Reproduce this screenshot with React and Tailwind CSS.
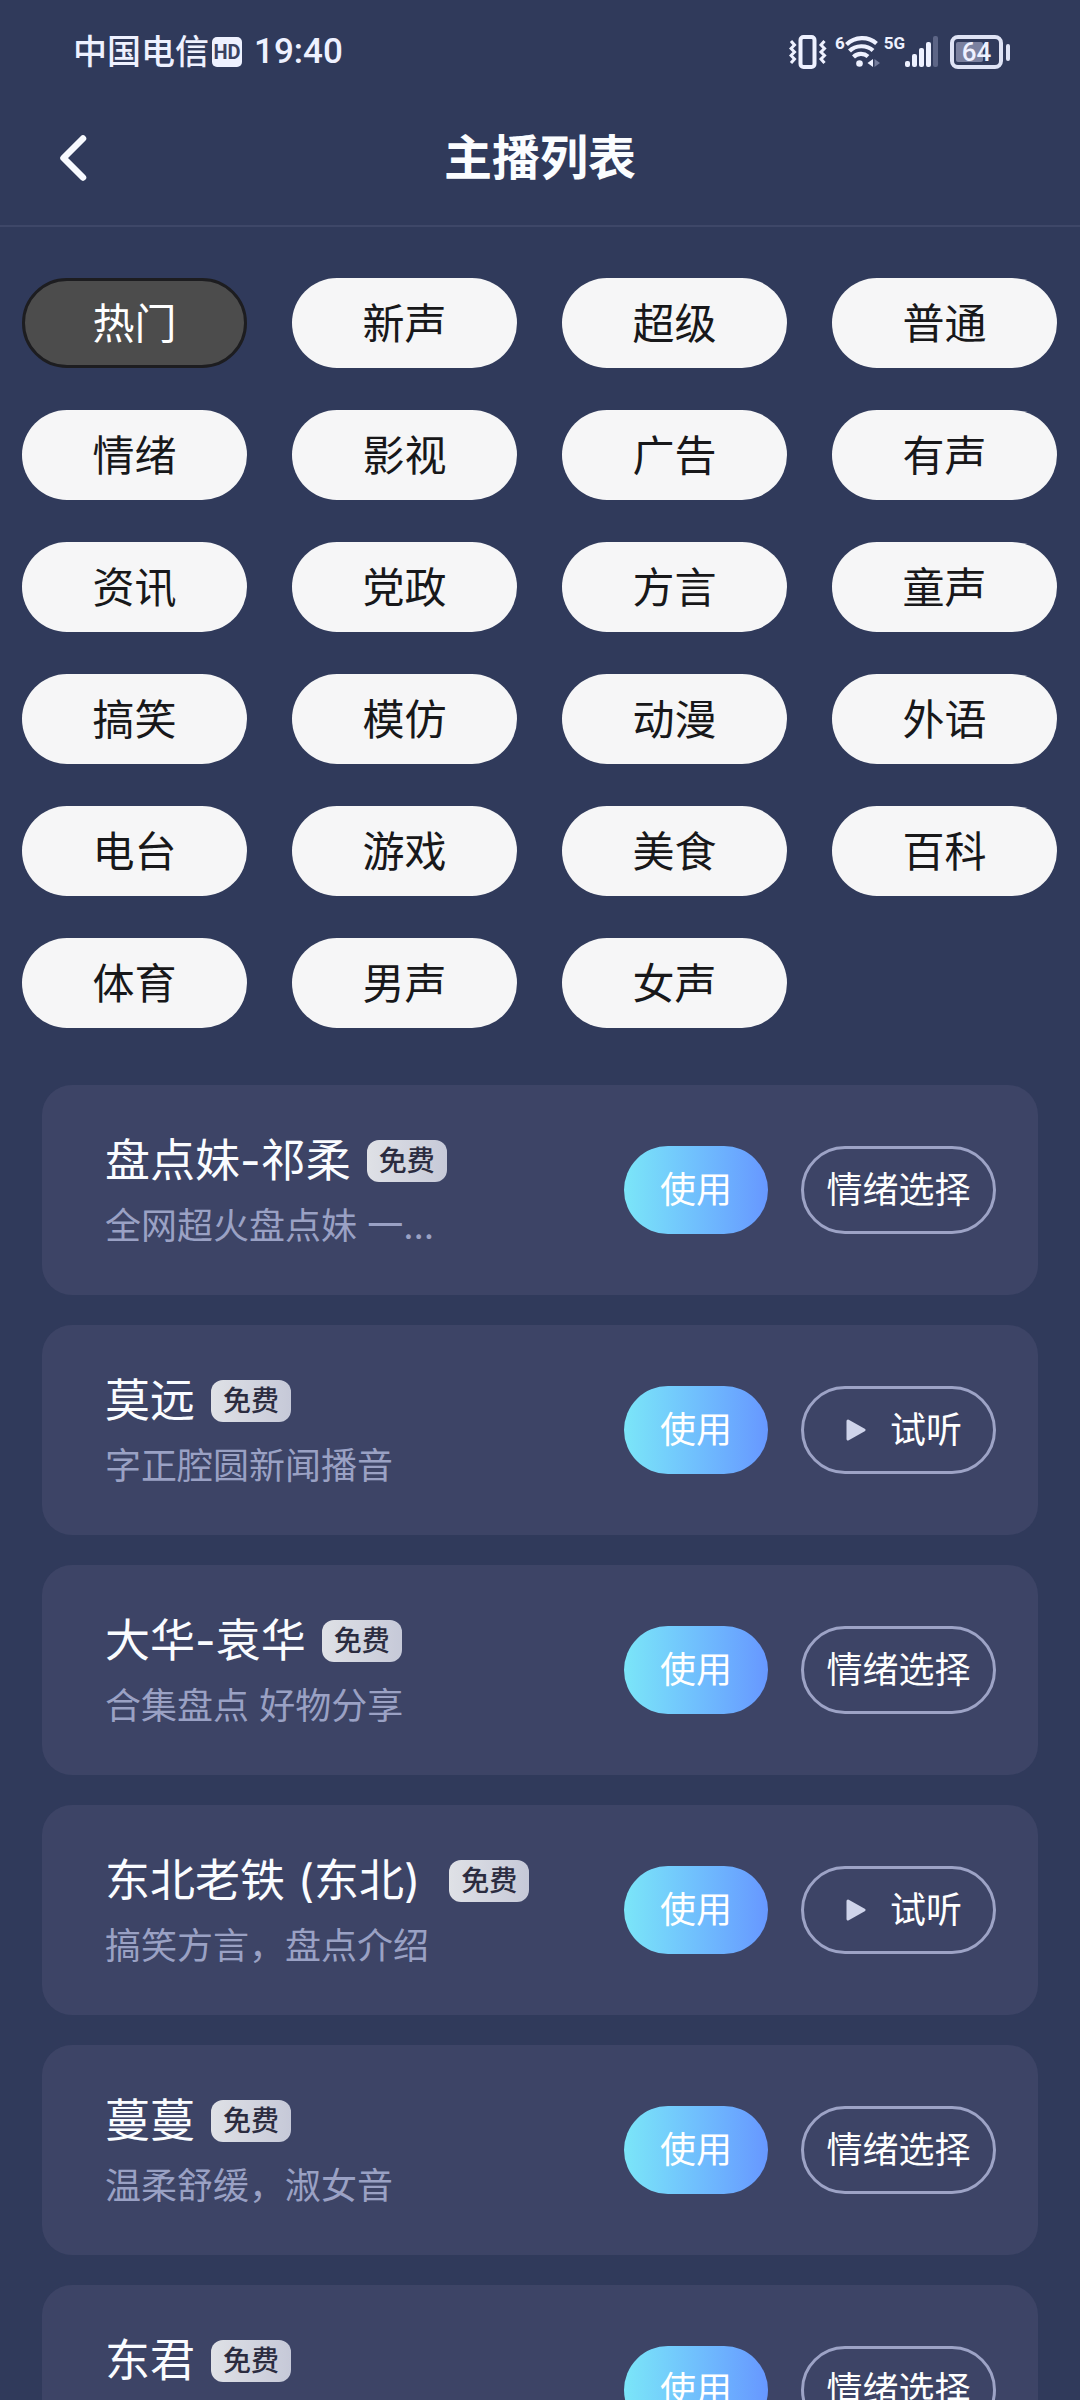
import React, { useState } from "react";

const categories = [
  "热门", "新声", "超级", "普通",
  "情绪", "影视", "广告", "有声",
  "资讯", "党政", "方言", "童声",
  "搞笑", "模仿", "动漫", "外语",
  "电台", "游戏", "美食", "百科",
  "体育", "男声", "女声",
];

const anchors = [
  { name: "盘点妹-祁柔", desc: "全网超火盘点妹 一...", action: "mood" },
  { name: "莫远", desc: "字正腔圆新闻播音", action: "listen" },
  { name: "大华-袁华", desc: "合集盘点 好物分享", action: "mood" },
  { name: "东北老铁 (东北) ", desc: "搞笑方言，盘点介绍", action: "listen" },
  { name: "蔓蔓", desc: "温柔舒缓，淑女音", action: "mood" },
  { name: "东君", desc: "", action: "mood" },
];

function VibrateIcon() {
  return (
    <svg width="38" height="34" viewBox="0 0 38 34" fill="none" stroke="#eef1ff" aria-hidden="true">
      <rect x="11.500" y="2" width="14" height="30" rx="3" strokeWidth="4" />
      <path d="M2 6l3.500 4-3.500 3.500 3.500 3.500-3.500 3.500 3.500 3.500-3.500 4" strokeWidth="3" />
      <path d="M35.500 6l-3.500 4 3.500 3.500-3.500 3.500 3.500 3.500-3.500 3.500 3.500 4" strokeWidth="3" />
    </svg>
  );
}

function WifiIcon() {
  return (
    <svg width="35" height="34" viewBox="0 0 35 34" fill="none" stroke="#eef1ff" aria-hidden="true">
      <path d="M1.500 9.500C10 1.500 23 1 31.500 8.500" strokeWidth="4.200" />
      <path d="M4.500 16C10.500 10 21.500 9.500 28 15.500" strokeWidth="4.200" />
      <path d="M8.500 22c4-4 10.500-4 14.500-.5" strokeWidth="4.200" />
      <circle cx="14.500" cy="28.500" r="3.300" fill="#eef1ff" stroke="none" />
      <path d="M28 24v8l-5.500-4z" fill="#eef1ff" stroke="none" />
      <path d="M29.500 24v8l5.500-4z" fill="#747c9b" stroke="none" />
    </svg>
  );
}

function SignalIcon() {
  return (
    <svg width="34" height="34" viewBox="0 0 34 34" fill="#eef1ff" aria-hidden="true">
      <rect x="0" y="26" width="5" height="6" rx="2" />
      <rect x="7" y="19" width="5" height="13" rx="2" />
      <rect x="14" y="13" width="5" height="19" rx="2" />
      <rect x="21" y="7" width="5" height="25" rx="2" />
      <rect x="28" y="1" width="5" height="31" rx="2" fill="#5d6586" />
    </svg>
  );
}

function StatusBar() {
  return (
    <div className="flex h-[104px] shrink-0 items-center justify-between pl-[73px] pr-[70px] font-['Roboto','Noto_Sans_CJK_SC',sans-serif] text-[#eef1ff]">
      <div className="flex items-center">
        <span className="text-[34px] leading-[48px] font-medium">中国电信</span>
        <span className="ml-[3px] flex h-[30px] w-[30px] items-center justify-center rounded-[5px] bg-[#eef1ff] text-[20px] leading-none font-bold text-[#3a4160]">
          HD
        </span>
        <span className="ml-3 text-[35px] leading-[48px] font-medium">19:40</span>
      </div>
      <div className="flex items-center">
        <VibrateIcon />
        <span className="ml-2 self-start text-[17px] leading-[16px] font-bold">6</span>
        <WifiIcon />
        <span className="ml-1 self-start text-[17px] leading-[16px] font-bold">5G</span>
        <SignalIcon />
        <div className="ml-[11px] flex items-center gap-[3px]">
          <div className="relative flex h-[34px] w-[53px] items-center justify-center rounded-lg border-4 border-[#dfe3f5]">
            <div className="absolute inset-y-[3px] left-[2px] w-[27px] rounded-[2px] bg-[#7b819f]" />
            <span className="relative text-[26px] leading-none font-medium">64</span>
          </div>
          <div className="h-[17px] w-[4px] rounded-[2px] bg-[#dfe3f5]" />
        </div>
      </div>
    </div>
  );
}

function Header() {
  return (
    <header className="relative shrink-0 border-b-2 border-[#3e4768] pb-[13px]">
      <div className="flex h-[108px] items-center justify-center">
        <button type="button" aria-label="返回" className="absolute left-[54px]">
          <svg width="36" height="54" viewBox="0 0 36 54" fill="none" stroke="#f8faff" strokeWidth="6.500" strokeLinecap="round" strokeLinejoin="round" aria-hidden="true">
            <path d="M29 7.500L9.500 27L29 46.500" />
          </svg>
        </button>
        <h1 className="text-5xl leading-[64px] font-bold text-[#fbfdff]">主播列表</h1>
      </div>
    </header>
  );
}

function Chip({ label, active, onClick }) {
  return (
    <button
      type="button"
      aria-pressed={active}
      onClick={onClick}
      className={
        active
          ? "h-[90px] rounded-full border-3 border-[#1d1d20] bg-[#4c4c4c] pt-0.5 text-[42px] leading-none text-white"
          : "h-[90px] rounded-full bg-[#f6f6f7] pt-0.5 text-[42px] leading-none text-[#18181a]"
      }
    >
      {label}
    </button>
  );
}

function AnchorCard({ name, desc, action }) {
  return (
    <li className="flex h-[210px] shrink-0 items-center justify-between rounded-[30px] bg-[#3d4466] pl-[63px] pr-[42px]">
      <div className="flex flex-col gap-2 pt-1">
        <div className="flex items-center gap-4">
          <h2 className="text-[45px] leading-[60px] whitespace-pre text-[#fafcff]">{name}</h2>
          <span className="rounded-xl bg-linear-to-r from-[#dfe1e6] to-[#c6c9d8] px-3 text-[28px] leading-[42px] font-medium text-[#2b2c40]">
            免费
          </span>
        </div>
        <p className="h-[54px] text-4xl leading-[54px] text-[#9aa1c4]">{desc}</p>
      </div>
      <div className="flex gap-[33px]">
        <button type="button" className="h-[88px] w-36 rounded-full bg-linear-to-r from-[#7be6f8] to-[#6797ff] text-4xl text-white">
          使用
        </button>
        {action === "listen" ? (
          <button type="button" className="flex h-[88px] w-[195px] items-center gap-6 rounded-full border-3 border-[#9da3c6] pl-[42px] text-4xl text-white">
            <svg width="20" height="22" viewBox="0 0 20 22" fill="#cfd4ea" stroke="#cfd4ea" strokeWidth="3" strokeLinejoin="round" aria-hidden="true">
              <path d="M2 2L18 11L2 20Z" />
            </svg>
            试听
          </button>
        ) : (
          <button type="button" className="h-[88px] w-[195px] rounded-full border-3 border-[#9da3c6] text-4xl whitespace-nowrap text-white">
            情绪选择
          </button>
        )}
      </div>
    </li>
  );
}

export default function App() {
  const [selected, setSelected] = useState("热门");
  return (
    <div className="flex h-screen flex-col overflow-hidden bg-[#303a5b] font-['Inter','Noto_Sans_CJK_SC',sans-serif]">
      <StatusBar />
      <Header />
      <nav aria-label="分类" className="grid shrink-0 grid-cols-4 gap-x-[45px] gap-y-[42px] pt-[51px] pr-[23px] pl-[22px]">
        {categories.map((label) => (
          <Chip key={label} label={label} active={label === selected} onClick={() => setSelected(label)} />
        ))}
      </nav>
      <ul className="mt-[57px] flex min-h-0 flex-col gap-[30px] overflow-hidden px-[42px]">
        {anchors.map((a) => (
          <AnchorCard key={a.name} {...a} />
        ))}
      </ul>
    </div>
  );
}
